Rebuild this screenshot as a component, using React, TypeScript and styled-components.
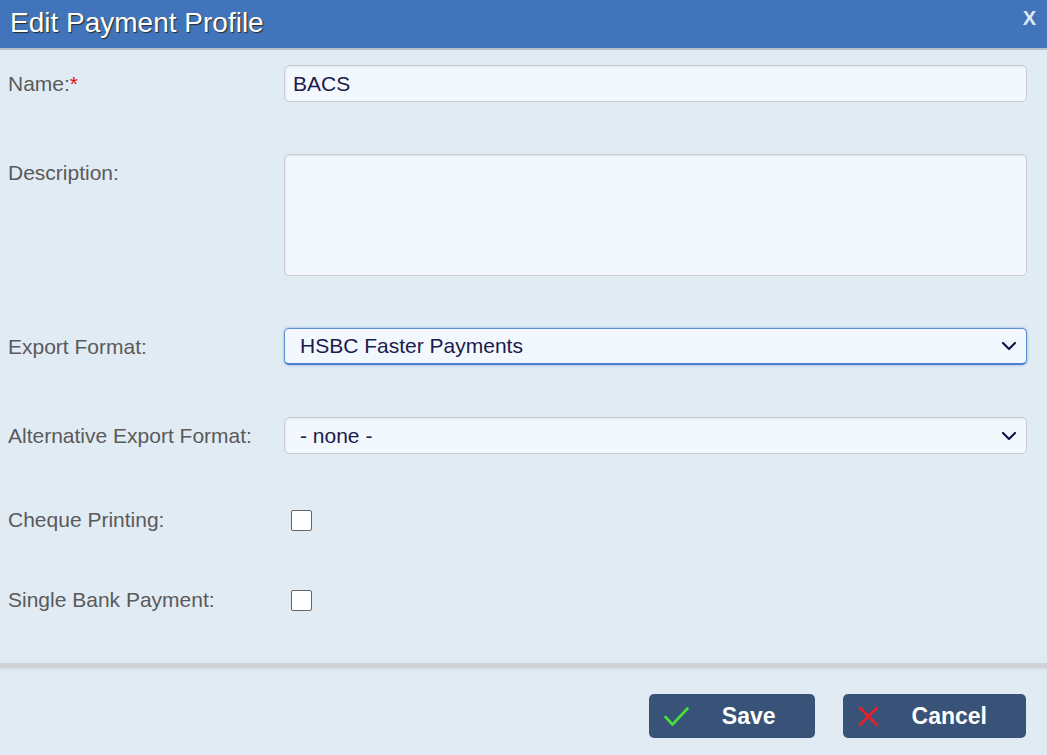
import { FC, ReactNode } from "react";
import styled, { createGlobalStyle } from "styled-components";

const GlobalStyle = createGlobalStyle`
  html, body {
    margin: 0;
    padding: 0;
    background: #e1ebf4;
    font-family: "Liberation Sans", Arial, sans-serif;
  }
  * {
    box-sizing: border-box;
  }
`;

type FieldRowProps = {
  label: string;
  required?: boolean;
  alignTop?: boolean;
  height?: number;
  children: ReactNode;
};

const FieldRow: FC<FieldRowProps> = ({ label, required, alignTop, height = 37, children }) => {
  return (
    <Row alignTop={alignTop}>
      <Label rowHeight={height}>
        {label}
        {required && <Required>*</Required>}
      </Label>
      <FieldCell rowHeight={height}>{children}</FieldCell>
    </Row>
  );
};

const Chevron = () => (
  <ChevronIcon width="16" height="10" viewBox="0 0 16 10">
    <path d="M2 2 L8 8 L14 2" fill="none" stroke="#14144a" strokeWidth="2.2" strokeLinecap="round" strokeLinejoin="round" />
  </ChevronIcon>
);

const CheckIcon = () => (
  <svg width="25" height="21" viewBox="0 0 25 21">
    <path d="M1.5 11 L8.5 18.5 L23.5 2.5" fill="none" stroke="#45e03c" strokeWidth="2.6" strokeLinecap="round" strokeLinejoin="round" />
  </svg>
);

const CrossIcon = () => (
  <svg width="21" height="21" viewBox="0 0 21 21">
    <path d="M2 2 L19 19 M19 2 L2 19" fill="none" stroke="#e8202a" strokeWidth="2.6" strokeLinecap="round" />
  </svg>
);

export default function App() {
  return (
    <>
      <GlobalStyle />
      <Dialog>
        <Header>
          <Title>Edit Payment Profile</Title>
          <Close>X</Close>
        </Header>
        <Body>
          <FieldRow label="Name:" required>
            <TextInput defaultValue="BACS" />
          </FieldRow>
          <FieldRow label="Description:" alignTop height={122}>
            <TextArea />
          </FieldRow>
          <FieldRow label="Export Format:">
            <Select focused>
              <span>HSBC Faster Payments</span>
              <Chevron />
            </Select>
          </FieldRow>
          <FieldRow label="Alternative Export Format:">
            <Select>
              <span>- none -</span>
              <Chevron />
            </Select>
          </FieldRow>
          <FieldRow label="Cheque Printing:" height={28}>
            <Checkbox />
          </FieldRow>
          <FieldRow label="Single Bank Payment:" height={28}>
            <Checkbox />
          </FieldRow>
        </Body>
        <Footer>
          <Button>
            <CheckIcon />
            <ButtonText>Save</ButtonText>
          </Button>
          <Button>
            <CrossIcon />
            <ButtonText>Cancel</ButtonText>
          </Button>
        </Footer>
      </Dialog>
    </>
  );
}

const Dialog = styled.div`
  width: 1047px;
  height: 755px;
  display: flex;
  flex-direction: column;
  background: #e1ebf4;
  overflow: hidden;
`;

const Header = styled.div`
  height: 50px;
  flex-shrink: 0;
  display: flex;
  align-items: flex-start;
  justify-content: space-between;
  background: #4174ba;
  border-bottom: 2px solid #b5c1cf;
  padding: 0 11px 0 10px;
`;

const Title = styled.h1`
  margin: 0;
  font-size: 28px;
  font-weight: normal;
  line-height: 46px;
  color: #ffffff;
  text-shadow: 1px 1px 1px #2a2a2a;
`;

const Close = styled.span`
  margin-top: 7px;
  font-size: 20px;
  font-weight: bold;
  color: #dfe8f5;
`;

const Body = styled.div`
  flex: 1;
  display: flex;
  flex-direction: column;
  gap: 52px;
  padding: 15px 20px 0 8px;
`;

const Row = styled.div<{ alignTop?: boolean }>`
  display: grid;
  grid-template-columns: 276px 1fr;
  align-items: ${({ alignTop }) => (alignTop ? "start" : "center")};
`;

const Label = styled.label<{ rowHeight: number }>`
  font-size: 21px;
  color: #5a5a5a;
  line-height: ${({ rowHeight }) => Math.min(rowHeight, 37)}px;
`;

const Required = styled.span`
  color: #e01010;
`;

const FieldCell = styled.div<{ rowHeight: number }>`
  height: ${({ rowHeight }) => rowHeight}px;
  display: flex;
  align-items: center;
`;

const fieldBase = `
  width: 100%;
  height: 100%;
  background: #f2f8fe;
  border: 1px solid #c9cdd2;
  border-radius: 5px;
  box-shadow: inset 1px 1px 2px rgba(0, 0, 0, 0.08);
  font-family: "Liberation Sans", Arial, sans-serif;
  font-size: 21px;
  color: #1b1b4d;
  outline: none;
`;

const TextInput = styled.input`
  ${fieldBase}
  padding: 0 8px;
`;

const TextArea = styled.textarea`
  ${fieldBase}
  resize: none;
  padding: 8px;
`;

const Select = styled.div<{ focused?: boolean }>`
  ${fieldBase}
  display: flex;
  align-items: center;
  justify-content: space-between;
  padding: 0 9px 0 15px;
  ${({ focused }) =>
    focused
      ? `border-color: #5b8fd6; border-bottom: 2px solid #4a7fcc; box-shadow: 0 0 3px rgba(66, 120, 200, 0.55);`
      : ""}
`;

const ChevronIcon = styled.svg`
  flex-shrink: 0;
`;

const Checkbox = styled.span`
  display: inline-block;
  width: 21px;
  height: 21px;
  margin-left: 7px;
  background: #ffffff;
  border: 1px solid #666666;
  border-radius: 2px;
`;

const Footer = styled.div`
  flex-shrink: 0;
  height: 92px;
  display: flex;
  justify-content: flex-end;
  align-items: flex-start;
  gap: 28px;
  padding: 26px 21px 0 0;
  border-top: 5px solid #cfd1d4;
  box-shadow: inset 0 2px 2px rgba(0, 0, 0, 0.04);
`;

const Button = styled.button`
  height: 44px;
  display: flex;
  align-items: center;
  gap: 33px;
  padding: 0 39px 0 15px;
  background: #385377;
  border: none;
  border-radius: 5px;
  color: #ffffff;
  cursor: pointer;
`;

const ButtonText = styled.span`
  font-family: "Liberation Sans", Arial, sans-serif;
  font-size: 23px;
  font-weight: bold;
`;
